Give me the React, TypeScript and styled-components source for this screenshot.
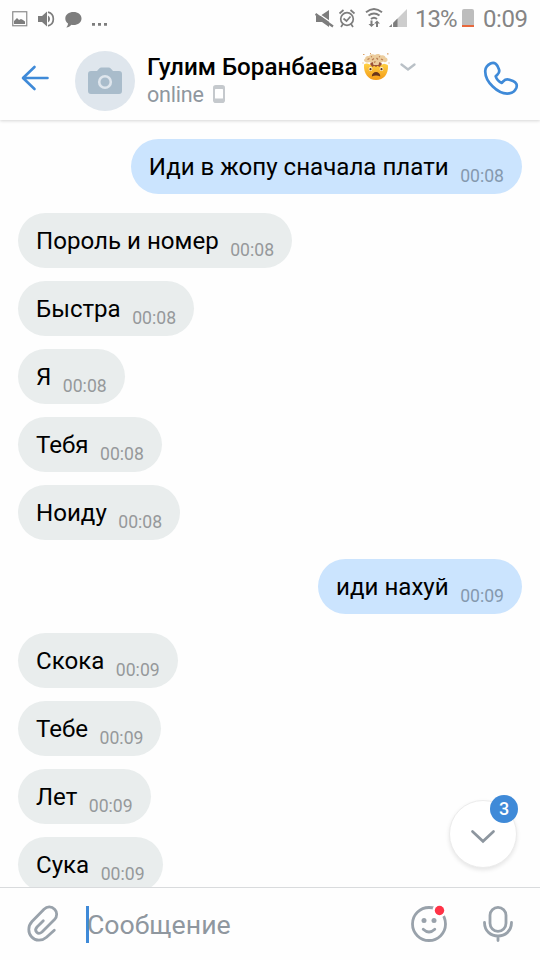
import styled, { createGlobalStyle } from "styled-components";

interface Message {
  id: number;
  text: string;
  time: string;
  own?: boolean;
}

const messages: Message[] = [
  { id: 1, text: "Иди в жопу сначала плати", time: "00:08", own: true },
  { id: 2, text: "Пороль и номер", time: "00:08" },
  { id: 3, text: "Быстра", time: "00:08" },
  { id: 4, text: "Я", time: "00:08" },
  { id: 5, text: "Тебя", time: "00:08" },
  { id: 6, text: "Ноиду", time: "00:08" },
  { id: 7, text: "иди нахуй", time: "00:09", own: true },
  { id: 8, text: "Скока", time: "00:09" },
  { id: 9, text: "Тебе", time: "00:09" },
  { id: 10, text: "Лет", time: "00:09" },
  { id: 11, text: "Сука", time: "00:09" },
];

function StatusBar() {
  return (
    <StatusBarContainer>
      <StatusGroup $gap={10}>
        <svg width="16" height="16" viewBox="0 0 16 16">
          <rect x="0.75" y="0.75" width="14" height="14" fill="none" stroke="#8c8c8c" strokeWidth="1.2" />
          <path d="M2 13V10l3-3 2 2 2-1 2 1 2 1.500V13z" fill="#7d7d7d" />
        </svg>
        <svg width="17" height="16" viewBox="0 0 17 16">
          <path d="M0 5h4l5-4.500v15L4 11H0z" fill="#7d7d7d" />
          <path d="M10 4.500a4 4 0 0 1 0 7z" fill="#7d7d7d" />
          <path d="M10 1.200a7 7 0 0 1 0 13.600" fill="none" stroke="#7d7d7d" strokeWidth="1.7" />
        </svg>
        <svg width="17" height="17" viewBox="0 0 17 17">
          <path
            d="M8.500 1C13 1 16.500 3.500 16.500 7.500S13 14 8.500 14c-.7 0-1.400 0-2-.2C5 15.500 3.300 16.300 1.300 16.500 2.400 15.300 3 14 3 12.500 1.200 11.300.300 9.600.300 7.500.300 3.500 4 1 8.500 1z"
            fill="#7d7d7d"
          />
        </svg>
        <svg width="16" height="16" viewBox="0 0 16 16">
          <path d="M0 12h3v2.700H0zM6 12h3v2.700H6zM12 12h3v2.700h-3z" fill="#7d7d7d" />
        </svg>
      </StatusGroup>

      <StatusGroup $gap={0}>
        <svg width="94" height="24" viewBox="0 0 94 24">
          {/* muted speaker */}
          <path d="M1 9h4l9-6v17l-7-5H1z" fill="#7d7d7d" />
          <path d="M1 5L19 17.500" stroke="#fff" strokeWidth="1.500" />
          <path d="M0.500 7L18 19.500" stroke="#7d7d7d" strokeWidth="2.200" />
          {/* alarm */}
          <g fill="none" stroke="#7d7d7d" strokeWidth="1.7">
            <circle cx="32" cy="12" r="6.300" />
            <path d="M28.500 11.500l3 2.500 4-4.500" />
            <path d="M24.500 6.500l4-3.500M39.500 6.500l-4-3.500M28 17l-2 3M36 17l2 3" />
          </g>
          {/* wifi */}
          <g fill="none" stroke="#7d7d7d" strokeWidth="1.900">
            <path d="M51 5.300Q59 -1.300 67 5.300" />
            <path d="M53.500 8.600Q59 4.200 64.500 8.600" />
            <path d="M56 11.900Q59 9.400 62 11.900" />
          </g>
          <path d="M55.500 13.500v3.500h-2l3 3 3-3h-2v-3.500zM61 20v-3.500h-2l3-3 3 3h-2V20z" fill="#7d7d7d" />
          {/* signal */}
          <path d="M74 20L92 2v18z" fill="#cdcdcd" />
          <path d="M74 20l8.500-8.500V20z" fill="#7d7d7d" />
          <path d="M77.500 15v5" stroke="#fff" strokeWidth="1.200" />
        </svg>
        <StatusText $width={48}>13%</StatusText>
        <Battery />
        <StatusText $width={44}>0:09</StatusText>
      </StatusGroup>
    </StatusBarContainer>
  );
}

function ExplodingHead() {
  return (
    <svg width="28" height="28" viewBox="0 0 28 28">
      <defs>
        <linearGradient id="face" x1="0" y1="0" x2="0" y2="1">
          <stop offset="0" stopColor="#ffd044" />
          <stop offset="1" stopColor="#f39a16" />
        </linearGradient>
      </defs>
      <path
        d="M2 11.500c1.200-1 2.500-1 4-.8l2.500 1 2-1 2 1.200h3l2-1.200 2 1 2.500-1 2 .5c1 .3 1.600.7 2 1.300C26.500 21.500 21.500 27 14 27S1.500 21 2 11.500z"
        fill="url(#face)"
      />
      <path d="M8 11l2-2.500h8l2 2.500-2.500 3-2-1.300-1.500 1.300-1.700-1.300-2 1.300z" fill="#9c5136" />
      <path
        d="M3.500 9C1.500 8.500 1.500 6 3.200 5.500 3 3.500 5.500 2.500 7 3.300 8 1 11.500 .8 13 2c1.500-1.500 5-1.200 6 .6 2-1 4.500 0 4.500 2 2 .2 2.800 2.800 1.200 4-1 .9-2.700.7-3.700 0-1 1.200-2.800 1.200-3.700.4L16.500 12h-5l-.8-3C9.500 10 8 9.800 7.200 9c-1 .8-2.500.8-3.700 0z"
        fill="#eccd9d"
      />
      <path
        d="M5.500 6.500l2-1M10 7l2-1.500M14.500 5l1.500 1.500M19 6l2 1M12 9.500l1.500-1M9 4l1-.5M17 3.500l1 .5"
        stroke="#b97a50"
        strokeWidth="1.200"
        fill="none"
      />
      <circle cx="8.500" cy="16" r="1.900" fill="#fff3d8" />
      <circle cx="19.500" cy="16" r="1.900" fill="#fff3d8" />
      <circle cx="8.500" cy="16.200" r="1.100" fill="#593014" />
      <circle cx="19.500" cy="16.200" r="1.100" fill="#593014" />
      <path d="M9.800 23.500c0-6 8.500-6 8.500 0-2.500-1.200-6-1.200-8.500 0z" fill="#69351b" />
      <path d="M1 1.500h1.500M25 .8h1.500M.5 10h1M26.500 10h1M8 .7h1" stroke="#dca36a" strokeWidth="1.200" />
    </svg>
  );
}

function ChatHeader() {
  return (
    <Header>
      <IconButton $width={70} type="button" aria-label="Назад">
        <svg width="28" height="26" viewBox="0 0 28 26">
          <path
            d="M13.500 2L2 13l11.500 11M2.500 13H26.500"
            fill="none"
            stroke="#3f8ad8"
            strokeWidth="2.600"
            strokeLinecap="round"
            strokeLinejoin="round"
          />
        </svg>
      </IconButton>

      <Avatar>
        <svg width="34" height="28" viewBox="0 0 34 28">
          <path
            d="M9 4l2-2.300Q12 .5 13.500 .5h7Q22 .5 23 1.700L25 4h6q3 0 3 3v17q0 3-3 3H3q-3 0-3-3V7q0-3 3-3z"
            fill="#a9bccb"
          />
          <circle cx="17" cy="15" r="5.800" fill="none" stroke="#dfe6ed" strokeWidth="2.600" />
        </svg>
      </Avatar>

      <Contact>
        <Name>
          <span>Гулим Боранбаева</span>
          <ExplodingHead />
          <svg className="chevron" width="16" height="9" viewBox="0 0 16 9">
            <path d="M1.500 1.500L8 6.500l6.500-5" fill="none" stroke="#b9c0c6" strokeWidth="2.300" strokeLinecap="round" />
          </svg>
        </Name>
        <Presence>
          online
          <svg width="12" height="18" viewBox="0 0 12 18">
            <rect width="12" height="18" rx="2.800" fill="#c5c9cd" />
            <rect x="2" y="4" width="8" height="9.500" rx="0.5" fill="#fff" />
          </svg>
        </Presence>
      </Contact>

      <IconButton $width={78} type="button" aria-label="Позвонить">
        <svg width="36" height="36" viewBox="0 0 36 36">
          <path
            d="M7.500 2.500C10.500 1 13 2.300 14.500 5l1.300 3c1 2.200.2 4.200-1.500 5.800l-1.600 1.500c.8 2.500 3.500 5.500 6.200 6.600l1.500-1.700c1.600-1.700 3.900-2.100 6-1.500l3.600 1.300c3.300 1.300 4.500 4 3.300 7-1.400 3.200-3.900 5-7 5.400C15 34 1.500 20 2.300 9.500c.3-3.300 2.200-5.500 5.200-7z"
            fill="none"
            stroke="#3f8ad8"
            strokeWidth="2.700"
            strokeLinejoin="round"
          />
        </svg>
      </IconButton>
    </Header>
  );
}

function Composer() {
  return (
    <ComposerContainer>
      <IconButton $width={86} type="button" aria-label="Прикрепить">
        <svg width="32" height="38" viewBox="0 0 32 38">
          <path
            d="M16.300 15.700L10 22c-3.500 4 1 8.500 5 5L27.500 14.500c3-3.200 2.700-7.500.3-10C24.500 1 20 1.300 17 4.200L5 16.500C.8 21 .8 28 4.700 32c4 4.500 10.500 4 14.800.2l7.800-7"
            fill="none"
            stroke="#99a2ab"
            strokeWidth="2.800"
            strokeLinecap="round"
            strokeLinejoin="round"
          />
        </svg>
      </IconButton>

      <Caret />
      <Placeholder>Сообщение</Placeholder>

      <IconButton $width={54} type="button" aria-label="Стикеры">
        <svg width="38" height="38" viewBox="0 0 38 38">
          <circle cx="19" cy="19" r="16.500" fill="none" stroke="#99a2ab" strokeWidth="2.800" />
          <circle cx="14" cy="15.500" r="2.500" fill="#99a2ab" />
          <circle cx="24" cy="15.500" r="2.500" fill="#99a2ab" />
          <path
            d="M13.200 24.300q5.800 5.500 11.600 0"
            fill="none"
            stroke="#99a2ab"
            strokeWidth="2.800"
            strokeLinecap="round"
          />
          <circle cx="29.500" cy="5.500" r="7" fill="#fff" />
          <circle cx="29.500" cy="5.500" r="4.700" fill="#ff3347" />
        </svg>
      </IconButton>
      <IconButton $width={84} type="button" aria-label="Голосовое сообщение">
        <svg width="32" height="38" viewBox="0 0 32 38">
          <g fill="none" stroke="#99a2ab" strokeWidth="2.800" strokeLinecap="round">
            <rect x="8" y="2.300" width="16" height="24" rx="8" />
            <path d="M2.500 17.500c0 18 27 18 27 0M16 31v4.500" />
          </g>
        </svg>
      </IconButton>
    </ComposerContainer>
  );
}

function App() {
  return (
    <Screen>
      <GlobalStyle />
      <StatusBar />
      <ChatHeader />

      <Messages>
        {messages.map((message, i) => (
          <Bubble
            key={message.id}
            $own={message.own}
            $newGroup={i > 0 && messages[i - 1].own !== message.own}
          >
            <p>{message.text}</p>
            <time>{message.time}</time>
          </Bubble>
        ))}

        <ScrollDown type="button" aria-label="Вниз">
          <svg width="26" height="15" viewBox="0 0 26 15">
            <path
              d="M2.500 2.500L13 12.300l10.500-9.800"
              fill="none"
              stroke="#8d969f"
              strokeWidth="2.700"
              strokeLinecap="round"
            />
          </svg>
          <Counter>3</Counter>
        </ScrollDown>
      </Messages>

      <Composer />
    </Screen>
  );
}

const GlobalStyle = createGlobalStyle`
  * {
    box-sizing: border-box;
  }

  body {
    margin: 0;
    background: #fff;
    font-family: Roboto, "Noto Sans", sans-serif;
  }

  p {
    margin: 0;
  }

  svg {
    display: block;
    flex-shrink: 0;
  }
`;

const Screen = styled.div`
  display: flex;
  flex-direction: column;
  width: 540px;
  height: 960px;
  overflow: hidden;
  background: #fefefe;
`;

const StatusBarContainer = styled.div`
  display: flex;
  align-items: center;
  justify-content: space-between;
  height: 38px;
  padding: 0 12px;
  background: #fefefe;
`;

const StatusGroup = styled.div<{ $gap: number }>`
  display: flex;
  align-items: center;
  gap: ${({ $gap }) => $gap}px;

  &:last-child {
    margin-right: 1px;
  }
`;

const StatusText = styled.span<{ $width: number }>`
  width: ${({ $width }) => $width}px;
  padding-left: 6px;
  font-size: 24px;
  line-height: 39px;
  letter-spacing: -1px;
  white-space: nowrap;
  color: #858585;

  &:last-child {
    padding-left: 0;
    letter-spacing: -0.4px;
  }
`;

const Battery = styled.i`
  width: 12px;
  height: 18px;
  margin: 0 9px 2px 5px;
  border-radius: 2px 2px 0 0;
  border-bottom: 2px solid #e8683c;
  background: #bdbdbd;
`;

const Header = styled.header`
  display: flex;
  align-items: center;
  height: 82px;
  flex-shrink: 0;
  z-index: 1;
  background: #fefefe;
  box-shadow: 0 1px 3px rgba(0, 0, 0, 0.16);
  clip-path: inset(0 0 -6px);
`;

const IconButton = styled.button<{ $width: number }>`
  display: flex;
  align-items: center;
  justify-content: center;
  flex-shrink: 0;
  width: ${({ $width }) => $width}px;
  height: 74px;
  padding: 0;
  border: none;
  background: none;

  ${Header} &:first-child {
    margin-right: 5px;
    margin-bottom: 2px;
  }
`;

const Avatar = styled.div`
  display: flex;
  align-items: center;
  justify-content: center;
  width: 60px;
  height: 60px;
  margin-top: 4px;
  border-radius: 50%;
  background: #dfe6ed;
`;

const Contact = styled.div`
  flex: 1;
  padding: 1px 0 0 12px;
`;

const Name = styled.div`
  display: flex;
  align-items: center;
  gap: 4px;
  height: 29px;
  font-weight: 500;
  font-size: 24.2px;
  color: #000;
  white-space: nowrap;

  .chevron {
    margin: 2px 0 0 6px;
  }
`;

const Presence = styled.div`
  display: flex;
  align-items: center;
  gap: 9px;
  height: 26px;
  font-size: 21.5px;
  letter-spacing: -0.2px;
  color: #8f979f;
`;

const Messages = styled.main`
  position: relative;
  display: flex;
  flex-direction: column;
  align-items: flex-start;
  gap: 13px;
  height: 767px;
  padding: 19px 18px 0;
  overflow: hidden;
`;

const Bubble = styled.div<{ $own?: boolean; $newGroup: boolean }>`
  display: flex;
  flex-shrink: 0;
  gap: 11.5px;
  height: 55px;
  align-self: ${({ $own }) => ($own ? "flex-end" : "flex-start")};
  margin-top: ${({ $newGroup }) => ($newGroup ? 6 : 0)}px;
  padding: 0 18px;
  border-radius: 28px;
  background: ${({ $own }) => ($own ? "#cbe4fe" : "#e9eded")};
  white-space: nowrap;

  p {
    font-size: 24.1px;
    line-height: 56px;
    color: #000;
  }

  time {
    font-size: 17.6px;
    line-height: 75px;
    color: ${({ $own }) => ($own ? "#8599ae" : "#96999b")};
  }
`;

const ScrollDown = styled.button`
  position: absolute;
  right: 23px;
  bottom: 19px;
  display: flex;
  align-items: center;
  justify-content: center;
  width: 68px;
  height: 68px;
  padding: 5px 0 0;
  border: 1px solid #ececec;
  border-radius: 50%;
  background: #fff;
  box-shadow: 0 2px 4px rgba(0, 0, 0, 0.1);
`;

const Counter = styled.span`
  position: absolute;
  top: -6px;
  right: -2px;
  width: 28px;
  height: 28px;
  border-radius: 50%;
  background: #3f8ad8;
  font-family: Roboto, sans-serif;
  font-weight: 500;
  font-size: 18px;
  line-height: 28px;
  text-align: center;
  color: #fff;
`;

const ComposerContainer = styled.footer`
  display: flex;
  align-items: center;
  height: 73px;
  flex-shrink: 0;
  border-top: 1px solid #d9dbdd;
  background: #fefefe;
`;

const Caret = styled.i`
  width: 3px;
  height: 37px;
  margin-right: -2px;
  background: #3f8ad8;
`;

const Placeholder = styled.p`
  flex: 1;
  padding-top: 1px;
  font-size: 26.700px;
  color: #8f979f;
`;

export default App;
